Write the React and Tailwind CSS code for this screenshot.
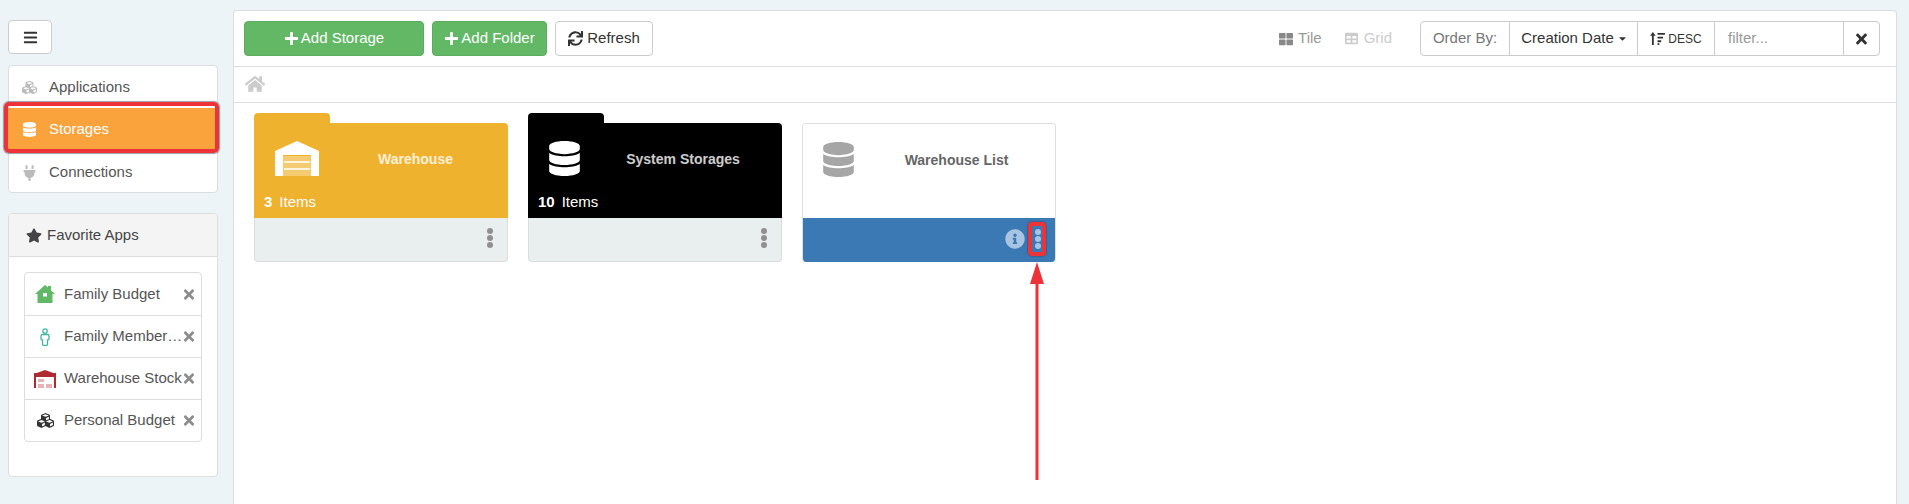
import React from 'react'
import {
  FaBars, FaCubes, FaDatabase, FaPlug, FaStar, FaTimes, FaPlus, FaSync,
  FaHome, FaThLarge, FaTable, FaInfoCircle, FaCaretDown,
} from 'react-icons/fa'

function WarehouseIcon({ className, fill, door }) {
  return (
    <svg viewBox="0 0 44 36" className={className}>
      <path d="M0 10 22 0 44 10V35H36V14H8V35H0Z" fill={fill} />
      <rect x="8" y="15" width="28" height="20" rx="1" fill={door} />
      <path d="M9 21H35M9 28H35" stroke={fill} strokeWidth="1.5" />
    </svg>
  )
}

function RedWarehouse({ className }) {
  return (
    <svg viewBox="0 0 22 18" className={className}>
      <path d="M0 4 11 0 22 4V18H20V7H2V18H0Z" fill="#b0292f" />
      <rect x="0" y="3" width="22" height="4" fill="#b0292f" />
      <path d="M4 9H10V12H4ZM4 14H10V18H4ZM12 14H18V18H12Z" fill="#e6b4b6" />
    </svg>
  )
}

function GreenHouse({ className }) {
  return (
    <svg viewBox="0 0 20 18" className={className}>
      <path d="M0 9 10 0 13 2.500V1H16V5.500L20 9H17.500V18H2.500V9Z" fill="#62b965" />
      <rect x="8" y="8" width="4" height="3.500" fill="#fff" />
    </svg>
  )
}

function PersonIcon({ className }) {
  return (
    <svg viewBox="0 0 10 18" fill="none" stroke="#3cb79f" strokeWidth="1.3" className={className}>
      <circle cx="5" cy="3" r="2.200" />
      <path d="M2.500 6.500H7.500C8.500 6.500 9 7.200 9 8V11C9 11.800 8.300 12 7.500 12V16.500C7.500 17 7 17.300 6.500 17.300H3.500C3 17.300 2.500 17 2.500 16.500V12C1.700 12 1 11.800 1 11V8C1 7.200 1.500 6.500 2.500 6.500Z" />
    </svg>
  )
}

function SortIcon({ className }) {
  return (
    <svg viewBox="0 0 16 14" fill="currentColor" className={className}>
      <path d="M3 0 6 4H4V14H2V4H0Z" />
      <path d="M8 1H16V3H8ZM8 5H14V7H8ZM8 9H12V11H8ZM8 12H10V14H8Z" />
    </svg>
  )
}

function Dots({ className }) {
  return (
    <div className={`flex flex-col gap-[1px] ${className}`}>
      <span className="w-[6px] h-[6px] rounded-full bg-current" />
      <span className="w-[6px] h-[6px] rounded-full bg-current" />
      <span className="w-[6px] h-[6px] rounded-full bg-current" />
    </div>
  )
}

const FAVORITES = [
  { label: 'Family Budget', icon: <GreenHouse className="w-[20px] h-[18px]" /> },
  { label: 'Family Member…', icon: <PersonIcon className="w-[10px] h-[18px]" /> },
  { label: 'Warehouse Stock', icon: <RedWarehouse className="w-[22px] h-[18px]" /> },
  { label: 'Personal Budget', icon: <FaCubes className="w-[19px] h-[17px] text-[#333]" /> },
]

function FolderCard({ color, icon, title, count }) {
  return (
    <div className="w-[254px]">
      <div className="w-[76px] h-[10px] rounded-t-[4px]" style={{ backgroundColor: color }} />
      <div className="h-[95px] pl-[21px] pt-[18px] relative rounded-tr-[4px]" style={{ backgroundColor: color }}>
        <div className="flex items-start">
          {icon}
          <div className="flex-1 text-center font-bold text-[14px] leading-[20px] pt-[8px] pl-[4px] text-white/80">{title}</div>
        </div>
        <div className="absolute left-[10px] top-[69px] text-white text-[15px] leading-[20px]">
          <b>{count}</b><span className="ml-[7px]">Items</span>
        </div>
      </div>
      <div className="h-[44px] pb-[3px] bg-[#e9eeef] border-x border-b border-[#ddd] rounded-b-[4px] flex items-center justify-end pr-[14px]">
        <Dots className="text-[#909090]" />
      </div>
    </div>
  )
}

export default function App() {
  return (
    <div className="relative flex w-[1909px] h-[504px] overflow-hidden bg-[#edf4f7] text-[15px] text-[#555] font-['Liberation_Sans',Arial,sans-serif]">
      {/* Sidebar */}
      <aside className="w-[233px] shrink-0 pl-2 pr-[15px] pt-5">
        <button className="w-[44px] h-[34px] flex items-center justify-center bg-white border border-[#ccc] rounded-[4px] text-[#333]">
          <FaBars className="w-[15px] h-[15px]" />
        </button>

        <nav className="relative mt-[11px] h-[128px] bg-white border border-[#ddd] rounded-[4px] flex flex-col">
          <div className="h-[42px] flex items-center pl-[12px] gap-[11px] pt-[1px]">
            <FaCubes className="w-[17px] h-[15px] text-[#bbb]" /> Applications
          </div>
          <div className="h-[42px] -mx-px pl-[14px] flex items-center gap-[12px] bg-[#faa23c] text-white">
            <FaDatabase className="w-[15px] h-[15px]" /> Storages
          </div>
          <div className="flex-1 flex items-center pl-[13px] gap-[12px] pt-[3px]">
            <FaPlug className="w-[15px] h-[16px] text-[#bbb]" /> Connections
          </div>
          <div className="absolute left-[-5px] right-[-2px] top-[36px] h-[51px] border-[4px] border-[#ee3338] rounded-[5px] shadow-[0_0_1px_1px_rgba(60,60,80,0.5)]" />
        </nav>

        <section className="mt-[20px] h-[264px] bg-white border border-[#ddd] rounded-[4px] overflow-hidden">
          <div className="h-[43px] bg-[#f4f4f4] border-b border-[#ddd] flex items-center pl-[17px] gap-[5px] text-[#444]">
            <FaStar className="w-[16px] h-[15px]" /> Favorite Apps
          </div>
          <ul className="mx-[15px] mt-[15px] border border-[#ddd] rounded-[4px]">
            {FAVORITES.map((f, i) => (
              <li key={f.label} className={`h-[42px] flex items-center ${i ? 'border-t border-[#ddd]' : ''}`}>
                <span className="w-[39px] flex justify-center shrink-0 pl-[1px]">{f.icon}</span>
                <span className="w-[118px] whitespace-nowrap overflow-hidden">{f.label}</span>
                <FaTimes className="w-[14px] h-[15px] text-[#8d8d8d] shrink-0" />
              </li>
            ))}
          </ul>
        </section>
      </aside>

      {/* Main */}
      <main className="w-[1664px] mt-[10px] bg-white border border-[#ddd] rounded-t-[4px] border-b-0">
        <div className="h-[56px] border-b border-[#ddd] flex items-center pl-[10px] pr-[16px]">
          <button className="w-[180px] h-[35px] rounded-[4px] bg-[#62b865] border border-[#5cab5f] text-white flex items-center justify-center gap-[2px]">
            <FaPlus className="w-[15px] h-[15px]" /> Add Storage
          </button>
          <button className="ml-[8px] w-[115px] h-[35px] rounded-[4px] bg-[#62b865] border border-[#5cab5f] text-white flex items-center justify-center gap-[2px]">
            <FaPlus className="w-[15px] h-[15px]" /> Add Folder
          </button>
          <button className="ml-[8px] w-[98px] h-[35px] rounded-[4px] bg-white border border-[#ccc] text-[#333] flex items-center justify-center gap-[4px]">
            <FaSync className="w-[15px] h-[15px]" /> Refresh
          </button>

          <div className="ml-auto flex items-center text-[#999] gap-[4px]">
            <FaThLarge className="w-[16px] h-[14px] text-[#888]" /> Tile
          </div>
          <div className="ml-[22px] flex items-center text-[#ccc] gap-[5px]">
            <FaTable className="w-[15px] h-[13px]" /> Grid
          </div>

          <div className="ml-[28px] w-[460px] h-[35px] flex items-stretch border border-[#ccc] rounded-[4px]">
            <div className="w-[89px] flex items-center justify-center text-[#777] border-r border-[#ccc]">Order By:</div>
            <div className="w-[128px] pl-[2px] flex items-center justify-center gap-[3px] text-[#333] border-r border-[#ccc]">
              Creation Date <FaCaretDown className="w-[11px] h-[11px] text-[#333]" />
            </div>
            <div className="w-[77px] flex items-center justify-center gap-[3px] text-[12px] text-[#333] border-r border-[#ccc]">
              <SortIcon className="w-[15px] h-[13px]" /> DESC
            </div>
            <div className="w-[129px] flex items-center pl-[13px] text-[#999] border-r border-[#ccc]">filter...</div>
            <div className="flex-1 flex items-center justify-center text-[#333]">
              <FaTimes className="w-[15px] h-[16px]" />
            </div>
          </div>
        </div>

        <div className="h-[36px] border-b border-[#ddd] flex items-center pl-[10px] pb-[1px]">
          <FaHome className="w-[22px] h-[18px] text-[#ccc]" />
        </div>

        <div className="flex items-start gap-[20px] pl-[20px] pt-[10px]">
          <FolderCard
            color="#efb22e"
            title="Warehouse"
            count="3"
            icon={<WarehouseIcon className="w-[44px] h-[36px]" fill="#fff" door="#f5cb71" />}
          />
          <FolderCard
            color="#000"
            title="System Storages"
            count="10"
            icon={<FaDatabase className="w-[31px] h-[35px] text-white" />}
          />
          <div className="w-[254px] mt-[10px] rounded-[4px] overflow-hidden border border-[#ddd] border-b-0">
            <div className="h-[94px] pl-[20px] pt-[18px] flex items-start bg-white">
              <FaDatabase className="w-[31px] h-[35px] text-[#a6a6a6]" />
              <div className="flex-1 text-center font-bold text-[14px] leading-[20px] pt-[8px] pl-[4px] text-[#666]">Warehouse List</div>
            </div>
            <div className="-mx-px h-[44px] pb-[3px] bg-[#3b79b5] flex items-center justify-end pr-[15px] gap-[10px]">
              <FaInfoCircle className="w-[20px] h-[20px] text-[#a9c4e3]" />
              <Dots className="text-[#a9c4e3]" />
            </div>
          </div>
        </div>
      </main>

      {/* Red annotations */}
      <div className="absolute left-[1028px] top-[222px] w-[18px] h-[34px] border-[4px] border-[#ee3338] rounded-[4px] shadow-[0_0_1px_1px_rgba(60,60,80,0.4)]" />
      <svg className="absolute left-[1029px] top-[262px] w-[16px] h-[218px]" viewBox="0 0 16 218">
        <path d="M8 0 15 22H9.500V218H6.500V22H1Z" fill="#ee3338" />
      </svg>
    </div>
  )
}
